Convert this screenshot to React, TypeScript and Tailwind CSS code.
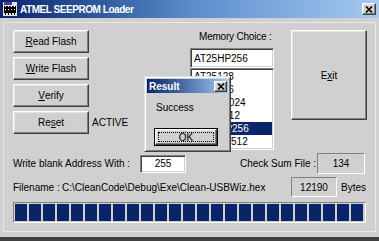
import React from "react";

const raised =
  "border border-t-white border-l-white border-r-[#404040] border-b-[#404040] shadow-[inset_-1px_-1px_0_#808080,inset_1px_1px_0_#e4e4e4]";
const sunken =
  "border border-t-[#808080] border-l-[#808080] border-r-white border-b-white shadow-[inset_1px_1px_0_#404040,inset_-1px_-1px_0_#d0d0d0]";
const staticEdge =
  "border border-t-[#808080] border-l-[#808080] border-r-white border-b-white";

function Btn({ children, className = "" }: { children: React.ReactNode; className?: string }) {
  return (
    <button
      className={`${raised} flex items-center justify-center bg-[#d0d0d0] text-[10px] text-black ${className}`}
    >
      {children}
    </button>
  );
}

function CloseBtn({ className = "" }: { className?: string }) {
  return (
    <div className={`${raised} flex items-center justify-center bg-[#d0d0d0] ${className}`}>
      <svg width="8" height="7" viewBox="0 0 8 7">
        <path d="M1 0.5 L7 6.5 M7 0.5 L1 6.5" stroke="#000" strokeWidth="1.6" />
      </svg>
    </div>
  );
}

function ChipIcon() {
  return (
    <svg width="14" height="14" viewBox="0 0 14 14">
      <rect x="0" y="0" width="14" height="14" fill="#e0e0e0" />
      <rect x="1" y="0" width="8" height="3" fill="#4a3a9a" />
      <rect x="1" y="4" width="12" height="7" fill="#000" />
      {[2, 5, 8, 11].map((x) => (
        <g key={x}>
          <rect x={x} y="3" width="1" height="2" fill="#fff" />
          <rect x={x} y="10" width="1" height="3" fill="#000" />
          <rect x={x} y="7" width="1" height="1" fill="#fff" />
        </g>
      ))}
    </svg>
  );
}

const chips = ["AT25128", "AT25256", "AT25F1024", "AT25F512", "AT25HP256", "AT25HP512"];

export default function App() {
  return (
    <div className="relative flex h-[241px] w-[379px] flex-col overflow-hidden bg-[#d0d0d0] font-['Liberation_Sans',Arial,sans-serif] text-[10px] text-black">
      {/* title bar */}
      <div className="flex h-[18px] items-center bg-linear-to-r from-[#0a246a] via-[#5a8ccc] to-[#a6caf0] pl-[3px] pr-[3px]">
        <ChipIcon />
        <span className="ml-[3px] text-[10px] font-bold tracking-[-0.45px] text-white">
          ATMEL SEEPROM Loader
        </span>
        <CloseBtn className="ml-auto h-[12px] w-[14px]" />
      </div>

      {/* client frame */}
      <div className="mx-[3px] mt-[4px] box-border h-[210px] border border-[#e8e8e8] pl-[9px] pt-[7px]">
        <div className="flex h-[120px]">
          <div className="flex w-[177px] flex-col gap-[4px]">
            <Btn className="h-[23px] w-[76px]">
              <span className="underline">R</span>ead Flash
            </Btn>
            <Btn className="h-[23px] w-[76px]">
              <span className="underline">W</span>rite Flash
            </Btn>
            <Btn className="h-[23px] w-[76px]">
              <span className="underline">V</span>erify
            </Btn>
            <div className="flex items-center">
              <Btn className="h-[23px] w-[76px]">
                Re<span className="underline">s</span>et
              </Btn>
              <span className="ml-[3px]">ACTIVE</span>
            </div>
          </div>

          <div className="flex w-[84px] flex-col">
            <div className="h-[14px] whitespace-nowrap pl-[9px] leading-[14px] tracking-[-0.2px]">
              Memory Choice :
            </div>
            <div className={`${sunken} mt-[4px] flex h-[20px] items-center bg-white pl-[3px]`}>
              AT25HP256
            </div>
            <div className={`${sunken} h-[82px] overflow-hidden bg-white pt-[1px]`}>
              {chips.map((c) => (
                <div
                  key={c}
                  className={`h-[13px] pl-[3px] leading-[13px] ${
                    c === "AT25HP256" ? "mx-[1px] bg-[#0a246a] pl-[2px] text-white" : ""
                  }`}
                >
                  {c}
                </div>
              ))}
            </div>
          </div>

          <Btn className="ml-[17px] h-[90px] w-[76px]">
            E<span className="underline">x</span>it
          </Btn>
        </div>

        <div className="mt-[3px] flex h-[21px] items-center">
          <span className="w-[127px] whitespace-nowrap">Write blank Address With :</span>
          <div className={`${sunken} flex h-[18px] w-[46px] items-center justify-center bg-white`}>255</div>
          <span className="ml-[54px] w-[77px] whitespace-nowrap">Check Sum File :</span>
          <div className={`${staticEdge} flex h-[21px] w-[48px] items-center justify-center`}>134</div>
        </div>

        <div className="mt-[3px] flex h-[20px] items-center">
          <span className="w-[49px] whitespace-nowrap">Filename :</span>
          <span className="w-[229px] whitespace-nowrap">C:\CleanCode\Debug\Exe\Clean-USBWiz.hex</span>
          <div className={`${staticEdge} flex h-[20px] w-[46px] items-center justify-center`}>12190</div>
          <span className="ml-[4px]">Bytes</span>
        </div>

        <div className={`${staticEdge} mt-[5px] flex h-[21px] w-[353px] gap-[2px] overflow-hidden p-[1px]`}>
          {Array.from({ length: 25 }).map((_, i) => (
            <div key={i} className="h-full w-[12px] shrink-0 bg-[#0a246a]" />
          ))}
          <div className="h-full w-[2px] shrink-0 bg-[#0a246a]" />
        </div>
      </div>

      <div className="mt-auto h-[4px] bg-[#404040]" />

      {/* result message box */}
      <div className="absolute left-[144px] top-[76px] h-[76px] w-[87px] border border-t-[#e0e0e0] border-l-[#e0e0e0] border-r-[#404040] border-b-[#404040] bg-[#d0d0d0] p-[2px] shadow-[inset_1px_1px_0_white,inset_-1px_-1px_0_#808080]">
        <div className="flex h-[14px] items-center bg-linear-to-r from-[#0a246a] to-[#a6caf0] pl-[2px]">
          <span className="text-[10px] font-bold text-white">Result</span>
          <CloseBtn className="ml-auto mr-[1px] h-[11px] w-[13px]" />
        </div>
        <div className="mt-[9px] h-[12px] pl-[9px] leading-[12px]">Success</div>
        <div className="ml-[7px] mt-[14px] h-[18px] w-[64px] border border-black">
          <div className={`${raised} flex h-full w-full items-center justify-center p-[2px]`}>
            <div className="flex h-full w-full items-center justify-center border border-dotted border-black">
              OK
            </div>
          </div>
        </div>
      </div>
    </div>
  );
}
